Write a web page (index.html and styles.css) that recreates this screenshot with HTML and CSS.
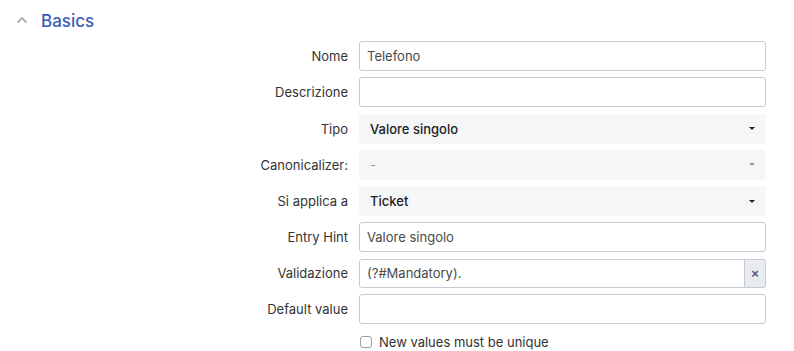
FILE: index.html
```html
<!DOCTYPE html>
<html lang="it">
<head>
    <meta charset="UTF-8">
    <title>Basics</title>
    <link rel="stylesheet" href="styles.css">
</head>
<body>

    <!-- Intestazione sezione -->
    <div class="section-head">
        <svg class="chevron" width="12" height="8" viewBox="0 0 12 8">
            <path d="M1.5 6.5 L6 2 L10.5 6.5" fill="none" stroke="#a9adb5" stroke-width="1.8"/>
        </svg>
        <h2>Basics</h2>
    </div>

    <form class="form">
        <label class="lbl">Nome</label>
        <input class="field" type="text" value="Telefono">

        <label class="lbl">Descrizione</label>
        <input class="field" type="text">

        <label class="lbl">Tipo</label>
        <div class="select"><span>Valore singolo</span><i class="caret"></i></div>

        <label class="lbl">Canonicalizer:</label>
        <div class="select disabled"><span>-</span><i class="caret"></i></div>

        <label class="lbl">Si applica a</label>
        <div class="select"><span>Ticket</span><i class="caret"></i></div>

        <label class="lbl">Entry Hint</label>
        <input class="field" type="text" value="Valore singolo">

        <label class="lbl">Validazione</label>
        <div class="input-group">
            <input class="field" type="text" value="(?#Mandatory).">
            <button type="button" class="clear">&times;</button>
        </div>

        <label class="lbl">Default value</label>
        <input class="field" type="text">

        <span></span>
        <label class="check"><span class="box"></span>New values must be unique</label>
    </form>

</body>
</html>
```

FILE: styles.css
```css
* {
    box-sizing: border-box;
}

body {
    margin: 0;
    font-family: Inter, "Noto Sans", sans-serif;
    font-size: 13px;
    color: #333;
    background: #fff;
}

.section-head {
    display: flex;
    align-items: center;
    height: 40px;
    padding-left: 16px;
}

.chevron {
    margin-right: 13px;
}

.section-head h2 {
    margin: 0;
    font-size: 17px;
    font-weight: 500;
    color: #3a5bb5;
    margin-top: 2px;
}

.form {
    display: grid;
    grid-template-columns: 348px 407px;
    column-gap: 11px;
    row-gap: 6.3px;
    margin-top: 1px;
    align-items: center;
}

.lbl {
    text-align: right;
    color: #333;
}

.field {
    height: 30px;
    width: 100%;
    border: 1px solid #c6cad2;
    border-radius: 3px;
    padding: 0 7px;
    font-family: inherit;
    font-size: 13px;
    color: #4a4a4a;
    background: #fff;
}

.select {
    height: 30px;
    display: flex;
    align-items: center;
    justify-content: space-between;
    padding: 0 11px 0 11px;
    background: #f5f6f8;
    border-radius: 4px;
    font-weight: 500;
    color: #222;
}

.select.disabled {
    color: #999;
    font-weight: 400;
}

.caret {
    width: 0;
    height: 0;
    border-left: 3px solid transparent;
    border-right: 3px solid transparent;
    border-top: 3px solid #222;
}

.select.disabled .caret {
    border-top-color: #9a9a9a;
}

.input-group {
    display: flex;
    height: 29px;
}

.input-group .field {
    height: 29px;
    border-radius: 3px 0 0 3px;
}

.clear {
    width: 21px;
    flex: none;
    border: 1px solid #c6cad2;
    border-left: none;
    border-radius: 0 3px 3px 0;
    background: #e9ecef;
    color: #4a5a78;
    font-size: 13px;
    font-weight: bold;
    padding: 0;
    line-height: 1;
}

.check {
    display: flex;
    align-items: center;
    height: 22px;
    margin-top: 1px;
    color: #333;
}

.check .box {
    width: 12px;
    height: 12px;
    border: 1px solid #9aa0aa;
    border-radius: 3px;
    margin: 0 7px 0 1px;
    background: #fff;
}
```
